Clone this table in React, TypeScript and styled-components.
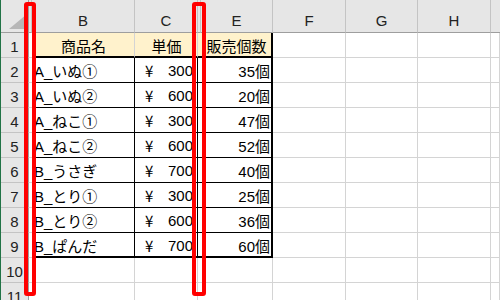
import React from 'react';
import styled, { createGlobalStyle } from 'styled-components';

const GRID_LINE = '1px solid #d4d4d4';
const HEAD_LINE = '1px solid #c4c4c4';
const HEAD_EDGE = '1px solid #9e9e9e';
const THIN = '1px solid #000';
const THICK = '2px solid #000';

const COLUMNS = '28px 3px 103px 63px 3px 72px 73px 72px 73px 1fr';
const LETTERS = ['', 'B', 'C', '', 'E', 'F', 'G', 'H', ''];

const items = [
  { name: 'A_いぬ①', price: 300, count: 35 },
  { name: 'A_いぬ②', price: 600, count: 20 },
  { name: 'A_ねこ①', price: 300, count: 47 },
  { name: 'A_ねこ②', price: 600, count: 52 },
  { name: 'B_うさぎ', price: 700, count: 40 },
  { name: 'B_とり①', price: 300, count: 25 },
  { name: 'B_とり②', price: 600, count: 36 },
  { name: 'B_ぱんだ', price: 700, count: 60 },
];

// column keys after the row header
const KEYS = ['A', 'B', 'C', 'D', 'E', 'F', 'G', 'H', 'I'];

function borders(row: number, key: string) {
  const inTable = row >= 1 && row <= 9;
  if (!inTable) return { right: GRID_LINE, bottom: GRID_LINE };

  const bottom = row === 1 || row === 9 ? THICK : THIN;
  switch (key) {
    case 'A':
      return { right: THICK, bottom: GRID_LINE };
    case 'B':
    case 'C':
    case 'D':
      return { right: row === 1 ? GRID_LINE : THIN, bottom };
    case 'E':
      return { right: THICK, bottom };
    default:
      return { right: GRID_LINE, bottom: GRID_LINE };
  }
}

export default function App() {
  const rows = Array.from({ length: 11 }, (_, i) => i + 1);

  const renderCell = (row: number, key: string) => {
    const { right, bottom } = borders(row, key);
    const yellow = row === 1 && ['B', 'C', 'D', 'E'].includes(key);
    const item = row >= 2 && row <= 9 ? items[row - 2] : null;

    if (row === 1 && key === 'B') {
      return <Cell key={key} $right={right} $bottom={bottom} $bg="#fff2cc" $align="center">商品名</Cell>;
    }
    if (row === 1 && key === 'C') {
      return <Cell key={key} $right={right} $bottom={bottom} $bg="#fff2cc" $align="center">単価</Cell>;
    }
    if (row === 1 && key === 'E') {
      return <Cell key={key} $right={right} $bottom={bottom} $bg="#fff2cc" $align="center">販売個数</Cell>;
    }
    if (item && key === 'B') {
      return <Cell key={key} $right={right} $bottom={bottom} $align="flex-start">{item.name}</Cell>;
    }
    if (item && key === 'C') {
      return (
        <Cell key={key} $right={right} $bottom={bottom} $align="space-between">
          <Yen>¥</Yen>
          <span>{item.price}</span>
        </Cell>
      );
    }
    if (item && key === 'E') {
      return <Cell key={key} $right={right} $bottom={bottom} $align="flex-end">{item.count}個</Cell>;
    }
    return <Cell key={key} $right={right} $bottom={bottom} $bg={yellow ? '#fff2cc' : undefined} />;
  };

  return (
    <>
      <GlobalStyle />
      <Frame>
        <Row $height={33}>
          <Corner>
            <svg width="18" height="15" viewBox="0 0 18 15">
              <polygon points="0,15 18,15 18,0" fill="#b7b7b7" />
            </svg>
          </Corner>
          {LETTERS.map((letter, i) => (
            <ColumnHead key={i} $last={i === LETTERS.length - 1}>
              {letter}
            </ColumnHead>
          ))}
        </Row>

        {rows.map((row) => (
          <Row key={row} $height={25}>
            <RowHead>{row}</RowHead>
            {KEYS.map((key) => renderCell(row, key))}
          </Row>
        ))}

        <Highlight $left={23} $width={12} />
        <Highlight $left={191} $width={14} />
      </Frame>
    </>
  );
}

const GlobalStyle = createGlobalStyle`
  html, body {
    margin: 0;
    padding: 0;
    width: 500px;
    height: 300px;
    overflow: hidden;
    background: #fff;
  }
  body {
    border-left: 1px solid #217346;
    box-sizing: border-box;
    font-family: "Liberation Sans", "Noto Sans CJK JP", sans-serif;
    font-size: 15px;
    color: #000;
  }
`;

const Frame = styled.div`
  position: relative;
  display: flex;
  flex-direction: column;
  width: 499px;
  height: 300px;
  overflow: hidden;
`;

const Row = styled.div<{ $height: number }>`
  display: grid;
  grid-template-columns: ${COLUMNS};
  height: ${(p) => p.$height}px;
  flex: none;
`;

const Corner = styled.div`
  display: flex;
  align-items: flex-end;
  justify-content: flex-end;
  padding: 0 1px 3px 0;
  background: #e6e6e6;
  border-right: ${HEAD_EDGE};
  border-bottom: ${HEAD_EDGE};
  box-sizing: border-box;
  overflow: hidden;

  svg {
    display: block;
    flex: none;
  }
`;

const ColumnHead = styled.div<{ $last: boolean }>`
  display: flex;
  align-items: center;
  justify-content: center;
  padding-top: 8px;
  background: #e6e6e6;
  border-right: ${(p) => (p.$last ? 'none' : HEAD_LINE)};
  border-bottom: ${HEAD_EDGE};
  box-sizing: border-box;
  color: #222;
  font-size: 15px;
  overflow: hidden;
`;

const RowHead = styled.div`
  display: flex;
  align-items: center;
  justify-content: center;
  padding-top: 2px;
  background: #e6e6e6;
  border-right: ${HEAD_EDGE};
  border-bottom: ${HEAD_LINE};
  box-sizing: border-box;
  color: #222;
  font-size: 15px;
`;

const Cell = styled.div<{ $right: string; $bottom: string; $bg?: string; $align?: string }>`
  display: flex;
  align-items: center;
  justify-content: ${(p) => p.$align || 'flex-start'};
  padding: 1px ${(p) => (p.$align === 'space-between' ? '4px 0 10px' : '1px 0 2px')};
  background: ${(p) => p.$bg || '#fff'};
  border-right: ${(p) => p.$right};
  border-bottom: ${(p) => p.$bottom};
  box-sizing: border-box;
  white-space: nowrap;
  overflow: hidden;
`;

const Yen = styled.span`
  font-family: "Noto Sans CJK JP", sans-serif;
`;

const Highlight = styled.div<{ $left: number; $width: number }>`
  position: absolute;
  top: 2px;
  left: ${(p) => p.$left}px;
  width: ${(p) => p.$width}px;
  height: 294px;
  border: 4px solid #ff0000;
  border-radius: 3px;
  box-sizing: border-box;
  pointer-events: none;
`;
